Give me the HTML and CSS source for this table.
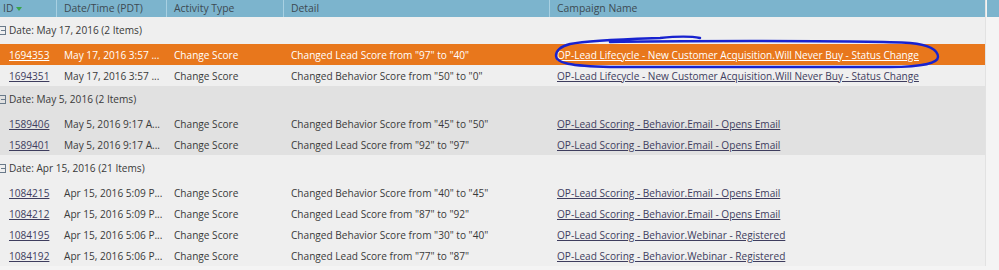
FILE: index.html
```html
<!DOCTYPE html>
<html>
<head>
<meta charset="utf-8">
<link rel="stylesheet" href="styles.css">
</head>
<body>
<div class="page">
  <div class="grid">
    <div class="row head">
      <div class="c c-id">ID <span class="sort"></span></div>
      <div class="c c-dt">Date/Time (PDT)</div>
      <div class="c c-at">Activity Type</div>
      <div class="c c-de">Detail</div>
      <div class="c c-ca">Campaign Name</div>
    </div>

    <div class="group">
      <div class="grow"><span class="tog"></span>Date: May 17, 2016 (2 Items)</div>
      <div class="row data sel">
        <div class="c c-id"><a>1694353</a></div>
        <div class="c c-dt">May 17, 2016 3:57 ...</div>
        <div class="c c-at">Change Score</div>
        <div class="c c-de">Changed Lead Score from "97" to "40"</div>
        <div class="c c-ca"><a>OP-Lead Lifecycle - New Customer Acquisition.Will Never Buy - Status Change</a></div>
      </div>
      <div class="row data">
        <div class="c c-id"><a>1694351</a></div>
        <div class="c c-dt">May 17, 2016 3:57 ...</div>
        <div class="c c-at">Change Score</div>
        <div class="c c-de">Changed Behavior Score from "50" to "0"</div>
        <div class="c c-ca"><a>OP-Lead Lifecycle - New Customer Acquisition.Will Never Buy - Status Change</a></div>
      </div>
    </div>

    <div class="group dark">
      <div class="grow"><span class="tog"></span>Date: May 5, 2016 (2 Items)</div>
      <div class="row data">
        <div class="c c-id"><a>1589406</a></div>
        <div class="c c-dt">May 5, 2016 9:17 A...</div>
        <div class="c c-at">Change Score</div>
        <div class="c c-de">Changed Behavior Score from "45" to "50"</div>
        <div class="c c-ca"><a>OP-Lead Scoring - Behavior.Email - Opens Email</a></div>
      </div>
      <div class="row data">
        <div class="c c-id"><a>1589401</a></div>
        <div class="c c-dt">May 5, 2016 9:17 A...</div>
        <div class="c c-at">Change Score</div>
        <div class="c c-de">Changed Lead Score from "92" to "97"</div>
        <div class="c c-ca"><a>OP-Lead Scoring - Behavior.Email - Opens Email</a></div>
      </div>
    </div>

    <div class="group">
      <div class="grow"><span class="tog"></span>Date: Apr 15, 2016 (21 Items)</div>
      <div class="row data">
        <div class="c c-id"><a>1084215</a></div>
        <div class="c c-dt">Apr 15, 2016 5:09 P...</div>
        <div class="c c-at">Change Score</div>
        <div class="c c-de">Changed Behavior Score from "40" to "45"</div>
        <div class="c c-ca"><a>OP-Lead Scoring - Behavior.Email - Opens Email</a></div>
      </div>
      <div class="row data">
        <div class="c c-id"><a>1084212</a></div>
        <div class="c c-dt">Apr 15, 2016 5:09 P...</div>
        <div class="c c-at">Change Score</div>
        <div class="c c-de">Changed Lead Score from "87" to "92"</div>
        <div class="c c-ca"><a>OP-Lead Scoring - Behavior.Email - Opens Email</a></div>
      </div>
      <div class="row data">
        <div class="c c-id"><a>1084195</a></div>
        <div class="c c-dt">Apr 15, 2016 5:06 P...</div>
        <div class="c c-at">Change Score</div>
        <div class="c c-de">Changed Behavior Score from "30" to "40"</div>
        <div class="c c-ca"><a>OP-Lead Scoring - Behavior.Webinar - Registered</a></div>
      </div>
      <div class="row data">
        <div class="c c-id"><a>1084192</a></div>
        <div class="c c-dt">Apr 15, 2016 5:06 P...</div>
        <div class="c c-at">Change Score</div>
        <div class="c c-de">Changed Lead Score from "77" to "87"</div>
        <div class="c c-ca"><a>OP-Lead Scoring - Behavior.Webinar - Registered</a></div>
      </div>
    </div>

    <svg class="circle" width="400" height="45" viewBox="0 0 400 45">
      <path d="M150 8 C 140 6, 130 6, 110 8 C 80 9, 40 10, 20 14 C 8 17, 6 22, 6 26 C 6 33, 20 36, 60 37 L 340 37 C 375 37, 388 32, 388 27 C 388 20, 380 15, 360 13 C 330 11, 260 11, 200 11 C 150 11, 100 11, 60 12" fill="none" stroke="#1722cf" stroke-width="2.4" stroke-linecap="round" stroke-linejoin="round"/>
    </svg>
  </div>
  <div class="side">
    <div class="side-head"></div>
  </div>
</div>
</body>
</html>
```

FILE: styles.css
```css
html, body {
  margin: 0;
  padding: 0;
  background: #f4f4f4;
}
body {
  font-family: "Open Sans", "Liberation Sans", sans-serif;
  font-size: 10.1px;
  color: #3a3a3a;
  width: 999px;
  height: 270px;
  overflow: hidden;
}
.page {
  display: flex;
}
.grid {
  position: relative;
  width: 985px;
  background: #efefef;
  border-right: 1px solid #e2e2e2;
}
.side {
  flex: 1;
  background: #f4f4f4;
}
.side-head {
  height: 17px;
  margin-left: 1px;
  background: #7cb4cd;
}
.row {
  display: grid;
  grid-template-columns: 57px 110px 117px 266px 1fr;
  align-items: center;
}
.head {
  height: 17px;
  background: #7cb4cd;
  color: #3d4a52;
  font-size: 10.4px;
}
.head .c {
  height: 17px;
  line-height: 17px;
  border-right: 1px solid #a8d0e2;
  box-sizing: border-box;
}
.head .c-ca { border-right: none; }
.c {
  padding-left: 7px;
  white-space: nowrap;
  overflow: hidden;
}
.head .c-id { padding-left: 3px; }
.data .c-id { padding-left: 9px; }
.sort {
  display: inline-block;
  width: 0;
  height: 0;
  border-left: 3px solid transparent;
  border-right: 3px solid transparent;
  border-top: 4px solid #3aa54a;
  vertical-align: 1px;
}
.grow {
  height: 27px;
  line-height: 27px;
  padding-left: 0;
  white-space: nowrap;
}
.tog {
  display: inline-block;
  width: 5px;
  height: 7px;
  border: 1px solid #6a7a8a;
  border-left: none;
  margin-right: 3px;
  vertical-align: -1px;
  background: linear-gradient(#6a7a8a, #6a7a8a) center / 4px 1px no-repeat;
}
.data {
  height: 21px;
}
.group {
  background: #efefef;
}
.group.dark {
  background: #e1e1e1;
}
.data a {
  color: #3e3d5e;
  text-decoration: underline;
}
.sel {
  background: #e8771c;
  color: #ffffff;
}
.sel a {
  color: #ffffff;
}
.circle {
  position: absolute;
  left: 550px;
  top: 30px;
}
```
